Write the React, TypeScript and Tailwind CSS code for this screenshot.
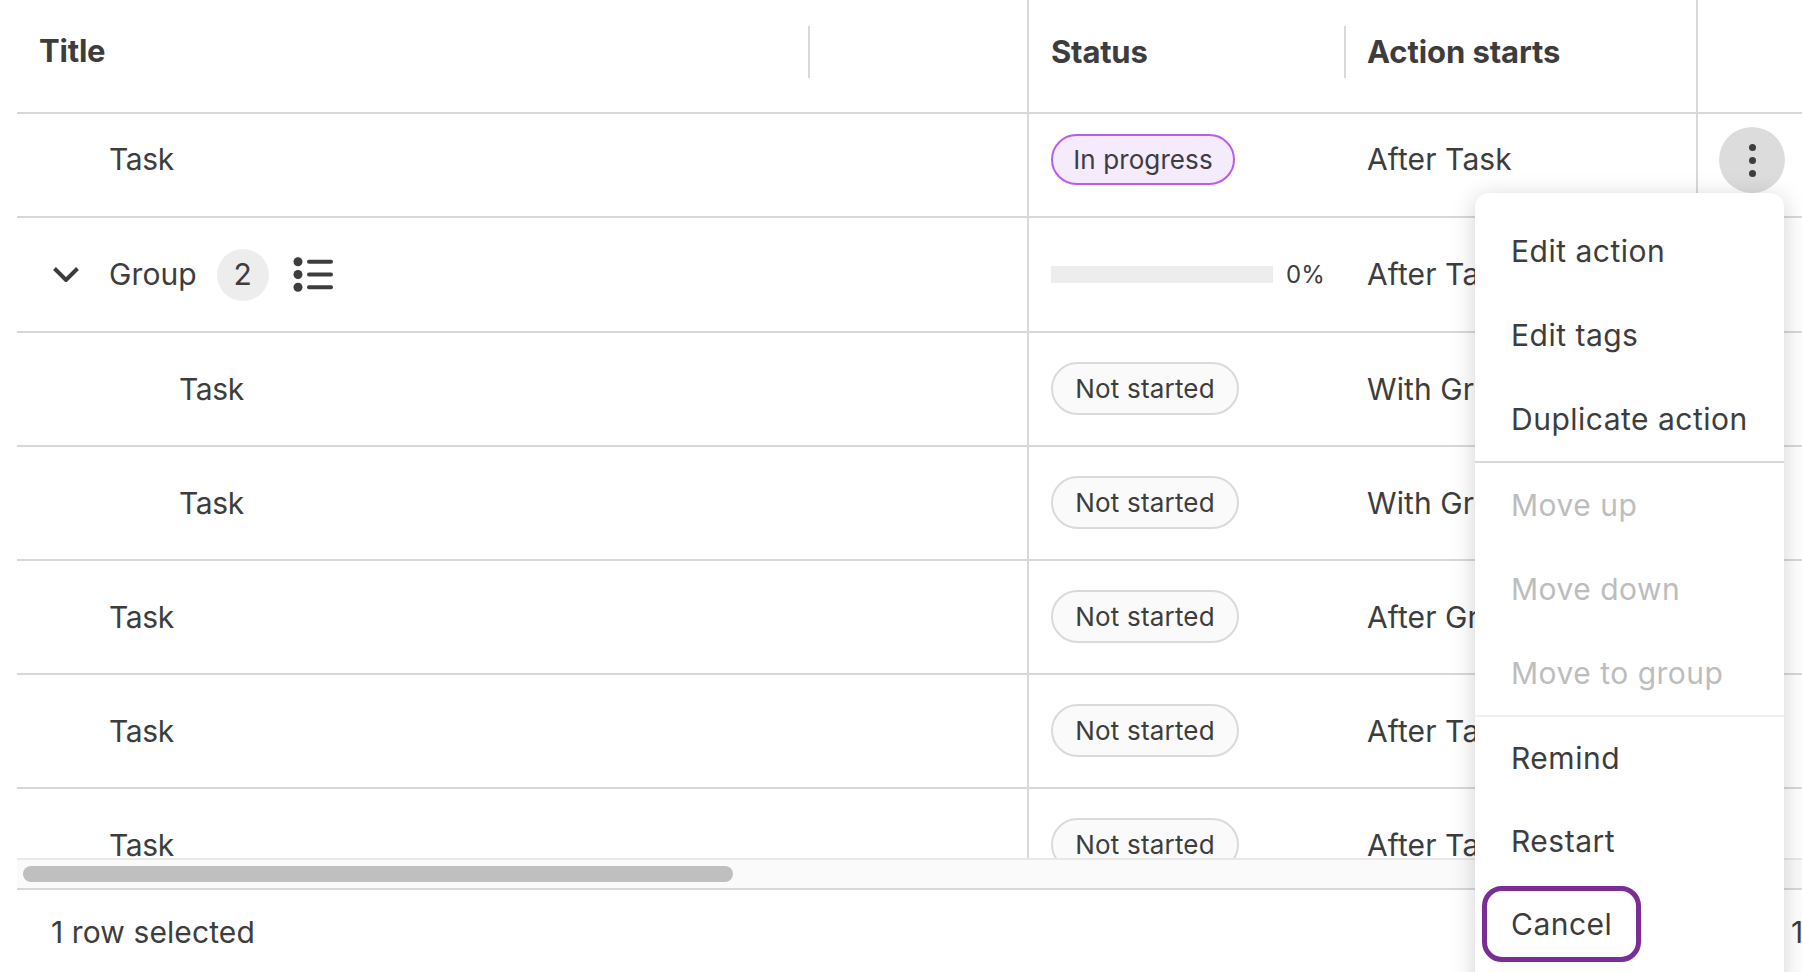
import { ReactNode } from "react";

const columns = "grid grid-cols-[1012px_317px_352px_104px]";

interface RowProps {
  title: ReactNode;
  status: ReactNode;
  starts: ReactNode;
  height: string;
  children?: ReactNode;
}

function Row({ title, status, starts, height, children }: RowProps) {
  return (
    <div className={`${columns} ${height} border-b-2 border-[#d8d8d8]`}>
      <div className="flex items-center border-r-2 border-[#d8d8d8]">{title}</div>
      <div className="flex items-center pl-[22px]">{status}</div>
      <div className="flex items-center border-r-2 border-[#d8d8d8] pl-[21px] whitespace-nowrap">{starts}</div>
      <div className="flex items-start justify-end">{children}</div>
    </div>
  );
}

function Task({ indent }: { indent: string }) {
  return <span className={`tracking-[-0.4px] ${indent}`}>Task</span>;
}

function NotStarted() {
  return (
    <span className="mb-[1px] flex h-[53px] w-[188px] items-center justify-center rounded-full border-2 border-[#dadada] bg-[#fafafa] text-[26px] tracking-[0.2px]">
      Not started
    </span>
  );
}

function ListIcon() {
  return (
    <svg width="40" height="35" viewBox="0 0 40 35" fill="#3d3d3d">
      <circle cx="5" cy="4.7" r="4.5" />
      <circle cx="5" cy="17.5" r="4.5" />
      <circle cx="5" cy="30.3" r="4.5" />
      <rect x="14" y="2.7" width="26" height="4" rx="2" />
      <rect x="14" y="15.5" width="26" height="4" rx="2" />
      <rect x="14" y="28.3" width="26" height="4" rx="2" />
    </svg>
  );
}

function MenuItem({ label, disabled, height = "h-[84px]" }: { label: string; disabled?: boolean; height?: string }) {
  return (
    <div className={`flex items-center pl-[36px] ${height} ${disabled ? "text-[#bdbdbd]" : ""}`}>{label}</div>
  );
}

export default function App() {
  return (
    <div
      className="relative h-[972px] w-full overflow-hidden bg-white text-[30px] tracking-[0.1px] text-[#3d3d3d]"
      style={{ fontFamily: "Inter, sans-serif" }}
    >
      <div className="ml-[17px] h-[858px] overflow-hidden">
        <div className={`${columns} h-[114px] border-b-2 border-[#d8d8d8] text-[31px] font-bold`}>
          <div className="flex items-center border-r-2 border-[#d8d8d8] pb-[9px]">
            <span className="ml-[22px] w-[769px] tracking-[-0.2px]">Title</span>
            <span className="h-[52px] w-[2px] bg-[#d8d8d8]" />
          </div>
          <div className="flex items-center justify-between pb-[9px] pl-[22px]">
            <span className="mt-[2px] tracking-[-0.2px]">Status</span>
            <span className="h-[52px] w-[2px] bg-[#d8d8d8]" />
          </div>
          <div className="flex items-center border-r-2 border-[#d8d8d8] pt-[2px] pb-[9px] pl-[21px]">
            <span className="tracking-[-0.1px]">Action starts</span>
          </div>
          <div />
        </div>

        <Row
          height="h-[104px]"
          title={<Task indent="mb-[12px] ml-[92px]" />}
          status={
            <span className="mb-[12px] flex h-[51px] w-[184px] items-center justify-center rounded-full border-2 border-[#b95cf0] bg-[#f6eafd] text-[26px]">
              In progress
            </span>
          }
          starts={<span className="mb-[12px]">After Task</span>}
        >
          <button
            type="button"
            className="mt-[13px] mr-[17px] flex h-[66px] w-[66px] flex-col items-center justify-center gap-[6px] rounded-full bg-[#dcdcdc]"
          >
            <span className="h-[7px] w-[7px] rounded-full bg-[#3d3d3d]" />
            <span className="h-[7px] w-[7px] rounded-full bg-[#3d3d3d]" />
            <span className="h-[7px] w-[7px] rounded-full bg-[#3d3d3d]" />
          </button>
        </Row>

        <Row
          height="h-[115px]"
          title={
            <div className="flex items-center">
              <svg width="26" height="15" viewBox="0 0 26 15" fill="none" className="ml-[36px]">
                <path d="M1.5 1.5 13 13 24.5 1.5" stroke="#3d3d3d" strokeWidth="4" />
              </svg>
              <span className="ml-[30px]">Group</span>
              <span className="ml-[20px] flex h-[52px] w-[52px] items-center justify-center rounded-full bg-[#ededed]">
                2
              </span>
              <span className="ml-[24px] flex">
                <ListIcon />
              </span>
            </div>
          }
          status={
            <div className="flex items-center">
              <span className="h-[17px] w-[222px] bg-[#ededed]" />
              <span className="ml-[13px] text-[24px]">0%</span>
            </div>
          }
          starts="After Task"
        />
        <Row height="h-[114px]" title={<Task indent="ml-[162px]" />} status={<NotStarted />} starts="With Group" />
        <Row height="h-[114px]" title={<Task indent="ml-[162px]" />} status={<NotStarted />} starts="With Group" />
        <Row height="h-[114px]" title={<Task indent="ml-[92px]" />} status={<NotStarted />} starts="After Group" />
        <Row height="h-[114px]" title={<Task indent="ml-[92px]" />} status={<NotStarted />} starts="After Task" />
        <Row height="h-[114px]" title={<Task indent="ml-[92px]" />} status={<NotStarted />} starts="After Task" />
      </div>

      <div className="ml-[17px] flex h-[32px] items-center border-y-2 border-t-[#e8e8e8] border-b-[#d8d8d8] bg-[#fafafa] pl-[6px]">
        <div className="h-[16px] w-[710px] rounded-full bg-[#bfbfbf]" />
      </div>

      <div className="flex h-[82px] items-center justify-between pt-[2px] pl-[51px]">
        <span>1 row selected</span>
        <span className="w-[11px] overflow-hidden">1</span>
      </div>

      <div className="absolute top-[193px] left-[1475px] h-[800px] w-[309px] rounded-t-[14px] bg-white pt-[16px] tracking-[0.5px] shadow-[0_4px_24px_rgba(0,0,0,0.18)]">
        <MenuItem label="Edit action" />
        <MenuItem label="Edit tags" />
        <MenuItem label="Duplicate action" />
        <div className="h-[2px] bg-[#d8d8d8]" />
        <MenuItem label="Move up" disabled />
        <MenuItem label="Move down" disabled />
        <MenuItem label="Move to group" disabled />
        <div className="h-[2px] bg-[#f0f0f0]" />
        <MenuItem label="Remind" height="h-[83px]" />
        <MenuItem label="Restart" height="h-[83px]" />
        <div className="mt-[3px] ml-[7px] flex h-[76px] w-[159px] items-center rounded-[20px] border-[5px] border-[#7b2d96] pl-[24px]">
          Cancel
        </div>
      </div>
    </div>
  );
}
